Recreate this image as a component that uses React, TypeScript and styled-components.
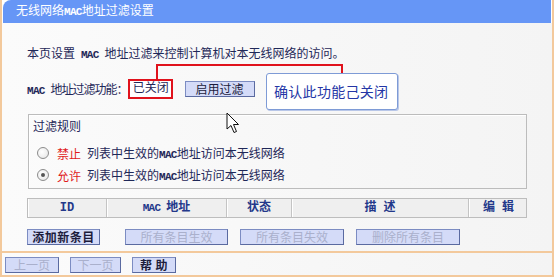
import React from "react";
import styled, { createGlobalStyle } from "styled-components";

const GlobalStyle = createGlobalStyle`
    html, body {
        margin: 0;
        padding: 0;
        background: #ffffff;
    }
    body {
        font-family: "Liberation Mono", "Noto Sans CJK SC", monospace;
        font-size: 12px;
        color: #1f2858;
    }
`;

// half-width latin text, narrowed to match the old bitmap font
const Latin = styled.span`
    font-family: "Liberation Mono", monospace;
    font-size: 11px;
    font-weight: 700;
    letter-spacing: -0.7px;
`;

const Frame = styled.div`
    position: relative;
    width: 550px;
    border: 2px solid #f3c99c;
    border-top: none;
    background: #ffffff;
`;

const TitleBar = styled.div`
    height: 23px;
    margin: 0 1px;
    padding-left: 13px;
    border-radius: 8px 0 0 0;
    background: #6696f6;
    color: #ffffff;
    line-height: 24px;
    font-size: 12px;
`;

const Body = styled.div`
    padding: 25px 25px 6px 25px;
    background: linear-gradient(90deg, #fbfbfb, #f4f4f4);
`;

const Intro = styled.div`
    height: 14px;
    line-height: 14px;
`;

const StatusRow = styled.div`
    position: relative;
    display: flex;
    align-items: center;
    height: 20px;
    margin-top: 17px;
`;

const StatusLabel = styled.span`
    letter-spacing: -1px;
    white-space: nowrap;
`;

const StatusBox = styled.span`
    box-sizing: border-box;
    width: 45px;
    height: 20px;
    border: 2px solid #e0121c;
    line-height: 16px;
    padding-left: 3px;
    background: #ffffff;
`;

const Button = styled.button<{ $disabled?: boolean; $bold?: boolean; $width: number }>`
    box-sizing: border-box;
    width: ${(p) => p.$width}px;
    height: 16px;
    padding: 0;
    border: 1px solid #7c8cc2;
    border-right-color: #5a6aa0;
    border-bottom-color: #5a6aa0;
    background: #d4dbf8;
    font-family: "Noto Sans CJK SC", sans-serif;
    font-size: 12px;
    line-height: 14px;
    font-weight: ${(p) => (p.$bold ? 700 : 400)};
    color: ${(p) => (p.$disabled ? "#aab0cc" : "#1c1c3c")};
    letter-spacing: ${(p) => (p.$bold ? "0.5px" : "0")};
`;

const EnableButton = styled(Button)`
    margin-left: 12px;
`;

const Callout = styled.div`
    position: absolute;
    left: 239px;
    top: -6px;
    box-sizing: border-box;
    width: 132px;
    height: 37px;
    padding-left: 7px;
    border: 1px solid #7e9bd6;
    border-radius: 3px;
    box-shadow: 1px 1px 0 #b9c7e8;
    background: #ffffff;
    font-family: "Noto Sans CJK SC", sans-serif;
    font-size: 14px;
    letter-spacing: 0.3px;
    line-height: 35px;
    color: #2436a6;
`;

const Connector = styled.svg`
    position: absolute;
    left: 129px;
    top: -15px;
`;

const RuleBox = styled.div`
    box-sizing: border-box;
    height: 75px;
    margin-top: 15px;
    margin-left: 1px;
    padding: 6px 0 0 4px;
    border: 1px solid #bcbcbc;
    box-shadow: inset 1px 1px 0 #ffffff;
`;

const Legend = styled.div`
    line-height: 14px;
    height: 14px;
    margin-bottom: 7px;
`;

const RadioRow = styled.div`
    display: flex;
    align-items: center;
    height: 22px;
    padding-left: 4px;
`;

const Radio = styled.span<{ $checked?: boolean }>`
    position: relative;
    box-sizing: border-box;
    width: 12px;
    height: 12px;
    border: 1px solid #8c8c8c;
    border-radius: 50%;
    background: radial-gradient(circle at 40% 40%, #ffffff, #e4e4e4);

    &::after {
        content: "";
        display: ${(p) => (p.$checked ? "block" : "none")};
        position: absolute;
        left: 3px;
        top: 3px;
        width: 4px;
        height: 4px;
        border-radius: 50%;
        background: #555555;
    }
`;

const RuleKind = styled.span`
    margin-left: 8px;
    color: #e01a1a;
    font-family: "Noto Sans CJK SC", sans-serif;
`;

const RuleText = styled.span`
    margin-left: 6px;
    white-space: nowrap;
`;

const TableHead = styled.div`
    display: grid;
    grid-template-columns: 78px 120px 65px 177px 60px;
    box-sizing: border-box;
    height: 20px;
    margin-top: 9px;
    border: 1px solid #bdbdbd;
    background: #efefef;
`;

const HeadCell = styled.div`
    border-left: 1px solid #c4c4c4;
    box-shadow: inset 1px 0 0 #ffffff;
    text-align: center;
    line-height: 18px;
    font-weight: 700;
    color: #23388a;

    &:first-child {
        border-left: none;
    }
`;

const ButtonRow = styled.div`
    display: flex;
    gap: 12px;
    margin-top: 11px;
`;

const AddButton = styled(Button)`
    margin-right: 13px;
`;

const Footer = styled.div`
    display: flex;
    gap: 11px;
    height: 24px;
    padding: 4px 0 0 3px;
    box-sizing: border-box;
    border-top: 2px solid #f3c99c;
    background: linear-gradient(90deg, #fbfbfb, #f4f4f4);
`;

const Cursor = styled.svg`
    position: absolute;
    left: 224px;
    top: 112px;
`;

export default function App(): React.ReactElement {
    return (
        <>
            <GlobalStyle />
            <Frame>
                <TitleBar>
                    无线网络<Latin>MAC</Latin>地址过滤设置
                </TitleBar>
                <Body>
                    <Intro>
                        本页设置<Latin> MAC </Latin>地址过滤来控制计算机对本无线网络的访问。
                    </Intro>
                    <StatusRow>
                        <StatusLabel>
                            <Latin>MAC </Latin>地址过滤功能：
                        </StatusLabel>
                        <StatusBox>已关闭</StatusBox>
                        <EnableButton $width={70}>启用过滤</EnableButton>
                        <Connector width="188" height="16" viewBox="0 0 188 16">
                            <polyline
                                points="1,16 1,1 186,1 186,9"
                                fill="none"
                                stroke="#e0121c"
                                strokeWidth="2"
                            />
                        </Connector>
                        <Callout>确认此功能己关闭</Callout>
                    </StatusRow>
                    <RuleBox>
                        <Legend>过滤规则</Legend>
                        <RadioRow>
                            <Radio />
                            <RuleKind>禁止</RuleKind>
                            <RuleText>
                                列表中生效的<Latin>MAC</Latin>地址访问本无线网络
                            </RuleText>
                        </RadioRow>
                        <RadioRow>
                            <Radio $checked />
                            <RuleKind>允许</RuleKind>
                            <RuleText>
                                列表中生效的<Latin>MAC</Latin>地址访问本无线网络
                            </RuleText>
                        </RadioRow>
                    </RuleBox>
                    <TableHead>
                        <HeadCell>ID</HeadCell>
                        <HeadCell>
                            <Latin>MAC </Latin>地址
                        </HeadCell>
                        <HeadCell>状态</HeadCell>
                        <HeadCell>描 述</HeadCell>
                        <HeadCell>编 辑</HeadCell>
                    </TableHead>
                    <ButtonRow>
                        <AddButton $width={73} $bold>添加新条目</AddButton>
                        <Button $width={103} $disabled>所有条目生效</Button>
                        <Button $width={104} $disabled>所有条目失效</Button>
                        <Button $width={104} $disabled>删除所有条目</Button>
                    </ButtonRow>
                </Body>
                <Footer>
                    <Button $width={54} $disabled>上一页</Button>
                    <Button $width={51} $disabled>下一页</Button>
                    <Button $width={44} $bold>帮 助</Button>
                </Footer>
                <Cursor width="14" height="22" viewBox="0 0 14 22">
                    <path
                        d="M1 1 L1 17 L5 13.5 L8 20.5 L10.5 19.5 L7.5 12.5 L12.5 12.5 Z"
                        fill="#ffffff"
                        stroke="#111111"
                        strokeWidth="1"
                        strokeLinejoin="miter"
                    />
                </Cursor>
            </Frame>
        </>
    );
}
